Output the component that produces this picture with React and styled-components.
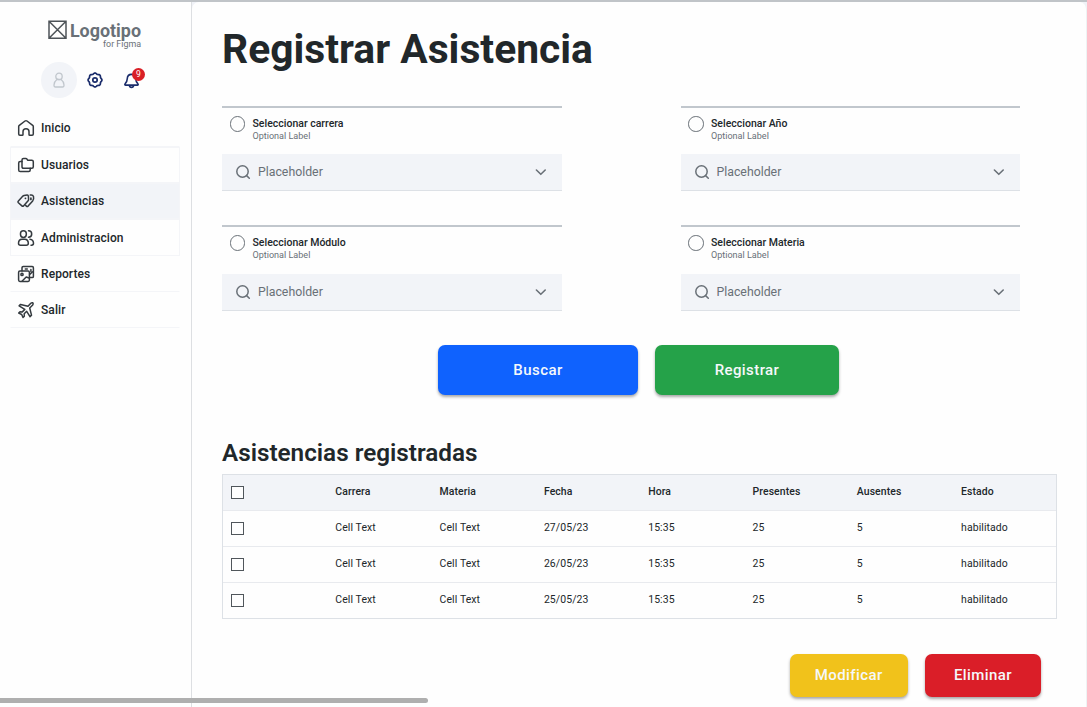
import React from "react";
import styled, { createGlobalStyle, css } from "styled-components";

const GlobalStyle = createGlobalStyle`
  * { box-sizing: border-box; }
  html, body { margin: 0; height: 100%; overflow: hidden; }
  body { font-family: Roboto, "Liberation Sans", sans-serif; background: #fefefe; color: #21272a; }
`;

const Page = styled.div`
  width: 1087px;
  height: 707px;
  display: flex;
  border-top: 2px solid #c0c4c8;
  background: #f0f2f7;
  overflow: hidden;
  position: relative;
`;

const Sidebar = styled.aside`
  width: 192px;
  flex: none;
  background: #fefefe;
  border-right: 1px solid #dddfe2;
`;

const Brand = styled.div`
  display: flex;
  justify-content: flex-end;
  margin: 17px 50px 0 0;
  height: 43px;
  color: #697077;
`;

const BrandMark = styled.svg`
  width: 19px;
  height: 20px;
  margin: 1px 2.5px 0 0;
  flex: none;
`;

const BrandText = styled.div`
  display: flex;
  flex-direction: column;
  align-items: flex-end;
`;

const BrandName = styled.div`
  font-size: 17.9px;
  line-height: 23px;
  font-weight: 700;
`;

const BrandNote = styled.div`
  font-size: 8.9px;
  line-height: 10px;
  margin-top: -3px;
`;

const Tools = styled.div`
  display: flex;
  align-items: center;
  margin-left: 41px;
  height: 36px;
`;

const Avatar = styled.div`
  width: 36px;
  height: 36px;
  border-radius: 50%;
  background: #f2f4f8;
  display: grid;
  place-items: center;
  margin-right: 9px;
`;

const BellWrap = styled.div`
  position: relative;
  width: 17px;
  height: 17px;
  margin-left: 19px;
`;

const Badge = styled.span`
  position: absolute;
  left: 9px;
  top: -4px;
  width: 13px;
  height: 13px;
  border-radius: 50%;
  background: #d91f26;
  color: #fff;
  font-size: 8.5px;
  line-height: 13px;
  text-align: center;
`;

const Nav = styled.nav`
  margin: 12.3px 11px 0 10px;
  display: flex;
  flex-direction: column;
`;

const NavItem = styled.a`
  height: 36.35px;
  display: flex;
  align-items: center;
  gap: 6px;
  padding-left: 6px;
  font-size: 12px;
  font-weight: 500;
  letter-spacing: 0.08px;
  color: #21272a;
  border: 1px solid transparent;
  border-bottom-color: #f4f5f8;
  ${(p) => p.$boxed && css`border-color: #f4f5f8;`}
  ${(p) => p.$active && css`background: #f2f4f8;`}
`;

const Icon = styled.svg`
  width: ${(p) => p.$size || 18}px;
  height: ${(p) => p.$size || 18}px;
  flex: none;
  display: block;
  fill: none;
  stroke: ${(p) => p.$color || "#343a3f"};
  stroke-width: ${(p) => p.$weight || 1.5};
  stroke-linecap: round;
  stroke-linejoin: round;
`;

const Main = styled.main`
  flex: 1;
  background: #fefefe;
  border-right: 1px solid #eef3f4;
  border-radius: 7px 7px 0 0;
  padding-left: 30px;
`;

const Title = styled.h1`
  margin: 22px 0 0;
  font-size: 40.8px;
  line-height: 51px;
  font-weight: 700;
  white-space: nowrap;
`;

const Filters = styled.section`
  display: grid;
  grid-template-columns: 339.5px 339.5px;
  column-gap: 119px;
  row-gap: 33.9px;
  margin-top: 30.5px;
`;

const Field = styled.div`
  height: 85.6px;
  border-top: 2px solid #c1c7cd;
  display: flex;
  flex-direction: column;
  justify-content: space-between;
`;

const FieldHead = styled.label`
  display: flex;
  gap: 7.5px;
  padding: 8.5px 0 0 7.5px;
`;

const Radio = styled.span`
  width: 15.5px;
  height: 15.5px;
  border: 1.5px solid #697077;
  border-radius: 50%;
`;

const FieldLabel = styled.div`
  font-size: 10.5px;
  line-height: 15px;
  font-weight: 500;
`;

const FieldHint = styled.div`
  font-size: 9.05px;
  line-height: 11px;
  color: #697077;
`;

const Select = styled.div`
  height: 37px;
  display: flex;
  align-items: center;
  background: #f2f4f8;
  border-bottom: 1.5px solid #dde1e6;
  padding: 0 13px;
  color: #697077;
  font-size: 12.3px;
`;

const SelectText = styled.span`
  flex: 1;
  margin-left: 7px;
`;

const Button = styled.button`
  width: ${(p) => p.$w}px;
  height: ${(p) => p.$h}px;
  background: ${(p) => p.$bg};
  border: 0;
  border-radius: 7px;
  color: #f5f8fb;
  font-family: inherit;
  font-size: 15px;
  font-weight: 500;
  letter-spacing: 0.42px;
  padding: 0;
  box-shadow: 0 2px 3px rgba(0, 0, 0, 0.34);
`;

const SearchActions = styled.div`
  display: flex;
  gap: 17px;
  margin: 34.4px 0 0 216px;
`;

const RowActions = styled.div`
  display: flex;
  gap: 17px;
  margin: 34.8px 0 0 567.5px;
`;

const Subtitle = styled.h2`
  margin: 42px 0 0;
  font-size: 24.25px;
  line-height: 32px;
  font-weight: 600;
`;

const Table = styled.div`
  width: 834.5px;
  margin-top: 5px;
  border: 1px solid #dde1e6;
`;

const Row = styled.div`
  height: 36px;
  display: grid;
  grid-template-columns: 104px repeat(6, 104.3px) 1fr;
  align-items: center;
  font-size: 10.45px;
  letter-spacing: 0.1px;
  ${(p) => p.$head && css`
    background: #f2f4f8;
    font-weight: 500;
    height: 35px;
  `}
  & + & { border-top: 1px solid #e8eaee; }
`;

const Cell = styled.div`
  padding-left: 8.3px;
  line-height: 14px;
  margin-top: -1.4px;
`;

const Check = styled.span`
  display: block;
  width: 13px;
  height: 13px;
  margin: 0 0 0 8px;
  border: 1px solid #50565b;
  background: #fefefe;
`;

const ScrollThumb = styled.div`
  position: absolute;
  left: -4px;
  bottom: 4px;
  width: 432px;
  height: 5px;
  border-radius: 3px;
  background: #afafaf;
`;

const HomeIcon = () => (
  <Icon viewBox="0 0 18 18">
    <path d="M1.7 7.6Q1.7 6.9 2.3 6.4L8 2Q9 1.3 10 2l5.700 4.400q.6.500.6 1.200v7.400q0 1.200-1.200 1.200h-2.300q-.8 0-.8-.8v-2.700a3 3 0 0 0-6 0v2.700q0 .8-.8.8H2.900q-1.200 0-1.200-1.200Z" />
  </Icon>
);

const FoldersIcon = () => (
  <Icon viewBox="0 0 18 18">
    <path d="M5 4q0-1.500 1.500-1.500h2.300q.8 0 1.200.7l.6 1h4.200q1.500 0 1.500 1.500v5.100q0 1.500-1.500 1.500H6.500Q5 12.300 5 10.800Z" />
    <path d="M5 5.400H3.200q-1.500 0-1.500 1.500v7q0 1.600 1.600 1.600h8.400q1.500 0 1.500-1.500v-1.700" />
  </Icon>
);

const TagsIcon = () => (
  <Icon viewBox="0 0 18 18">
    <path d="M1.400 8.900 5.900 4.100q.5-.5 1.200-.6l3-.4q1.200-.1 1.300 1.100l.2 3.300q0 .7-.5 1.200l-4.600 5.200q-.8.8-1.600 0L1.400 10.700q-.8-.9 0-1.800Z" />
    <path d="M13.300 3.100q2.500-.5 3.200 1.500.6 2.300-.8 4.300l-4.600 5.200q-.8.800-1.700 0L8.700 13.400" />
    <path d="M8.400 6.300h.1M13.900 6.200v1.300" strokeWidth="1.700" />
  </Icon>
);

const UsersIcon = () => (
  <Icon viewBox="0 0 18 18">
    <rect x="3.500" y="1.700" width="5.800" height="6.700" rx="2.900" />
    <path d="M1.500 14.300q0-4 3.600-4.100h2.600q3.600.1 3.600 4.100 0 2-2 2H3.500q-2 0-2-2Z" />
    <path d="M11.500 1.800a3.200 3.200 0 0 1 0 6.400M12.900 10.200q3.600.4 3.600 4.100 0 1.900-1.900 1.900h-.6" />
  </Icon>
);

const ReportsIcon = () => (
  <Icon viewBox="0 0 18 18">
    <rect x="1.600" y="6.100" width="10.800" height="10.300" rx="1.300" />
    <path d="M5 5.700V2.800q0-1.200 1.200-1.200h9q1.200 0 1.200 1.200v8.600q0 1.200-1.200 1.200h-2.400" />
    <circle cx="5" cy="9.400" r="1.100" />
    <path d="m5.200 16 4-4 3 1M8.300 3.900h2M13.900 4.500v2M12.700 9.400l3-2.600" />
  </Icon>
);

const PlaneIcon = () => (
  <Icon viewBox="0 0 18 18">
    <path d="M11 5.200 13.800 2.300q1-.9 2-.5.8.8-.1 2.200l-3 3 1.800 7.100-1.500 1.500-3.300-5.300-2.500 2.500.1 2.400-1.300 1.300-1.300-3-3-1.400 1.300-1.300 2.300.1L7.800 8.400 2.100 4.900l1.500-1.500Z" />
  </Icon>
);

const PersonIcon = () => (
  <Icon viewBox="0 0 18 18" $color="#c1c7cd" $weight={1.300}>
    <circle cx="9" cy="5.400" r="3.200" />
    <path d="M6.900 8.500h4.200q2.700 2 2.900 5.500.1 2-1.600 2H5.600q-1.700 0-1.600-2 .2-3.500 2.900-5.500Z" />
  </Icon>
);

const gearPath = (() => {
  const pts = [];
  for (let i = 0; i <= 96; i += 1) {
    const a = (i / 96) * Math.PI * 2;
    const r = 6.500 + 0.450 * Math.cos(a * 8);
    pts.push(`${(9 + r * Math.cos(a)).toFixed(2)} ${(9 + r * Math.sin(a)).toFixed(2)}`);
  }
  return `M${pts.join("L")}Z`;
})();

const GearIcon = () => (
  <Icon viewBox="0 0 18 18" $color="#1a2c6b" $weight={1.700}>
    <path d={gearPath} />
    <circle cx="9" cy="9" r="2.200" />
  </Icon>
);

const BellIcon = () => (
  <Icon viewBox="0 0 18 18" $size={17} $color="#1a2c6b" $weight={1.700}>
    <path d="M9 2.500c-3 0-4.400 2.100-4.500 4.700-.1 2.900-.6 3.900-2.300 5.400-.5.600-.3 1.300.6 1.300h12.400c.9 0 1.100-.7.600-1.300-1.700-1.500-2.200-2.500-2.300-5.400C13.400 4.600 12 2.500 9 2.500ZM6.800 14.200c.2 2.800 4.200 2.800 4.400 0" />
  </Icon>
);

const SearchIcon = () => (
  <Icon viewBox="0 0 16 16" $size={16} $color="#697077" $weight={1.500}>
    <circle cx="7.500" cy="7.500" r="5.700" />
    <path d="m11.600 11.600 2.700 2.700" />
  </Icon>
);

const ChevronIcon = () => (
  <Icon viewBox="0 0 16 16" $size={16} $color="#697077" $weight={1.600}>
    <path d="m3.400 6 4.400 4.300L12.200 6" />
  </Icon>
);

const navItems = [
  { label: "Inicio", icon: HomeIcon },
  { label: "Usuarios", icon: FoldersIcon, boxed: true },
  { label: "Asistencias", icon: TagsIcon, boxed: true, active: true },
  { label: "Administracion", icon: UsersIcon, boxed: true },
  { label: "Reportes", icon: ReportsIcon },
  { label: "Salir", icon: PlaneIcon },
];

const fields = ["Seleccionar carrera", "Seleccionar Año", "Seleccionar Módulo", "Seleccionar Materia"];
const columns = ["Carrera", "Materia", "Fecha", "Hora", "Presentes", "Ausentes", "Estado"];
const records = ["27/05/23", "26/05/23", "25/05/23"].map((date) => [
  "Cell Text", "Cell Text", date, "15:35", "25", "5", "habilitado",
]);

export default function App() {
  return (
    <>
      <GlobalStyle />
      <Page>
        <Sidebar>
          <Brand>
            <BrandMark viewBox="0 0 19 20" fill="none" stroke="#4d5358" strokeWidth="1.500">
              <path d="M1 1.200h17v17H1ZM1 1.200l17 17M18 1.200l-17 17" />
            </BrandMark>
            <BrandText>
              <BrandName>Logotipo</BrandName>
              <BrandNote>for Figma</BrandNote>
            </BrandText>
          </Brand>
          <Tools>
            <Avatar><PersonIcon /></Avatar>
            <GearIcon />
            <BellWrap>
              <BellIcon />
              <Badge>9</Badge>
            </BellWrap>
          </Tools>
          <Nav>
            {navItems.map(({ label, icon: Glyph, boxed, active }) => (
              <NavItem key={label} $boxed={boxed} $active={active}>
                <Glyph />
                {label}
              </NavItem>
            ))}
          </Nav>
        </Sidebar>
        <Main>
          <Title>Registrar Asistencia</Title>
          <Filters>
            {fields.map((label) => (
              <Field key={label}>
                <FieldHead>
                  <Radio />
                  <div>
                    <FieldLabel>{label}</FieldLabel>
                    <FieldHint>Optional Label</FieldHint>
                  </div>
                </FieldHead>
                <Select>
                  <SearchIcon />
                  <SelectText>Placeholder</SelectText>
                  <ChevronIcon />
                </Select>
              </Field>
            ))}
          </Filters>
          <SearchActions>
            <Button $w={200} $h={50} $bg="#0f62fe">Buscar</Button>
            <Button $w={184} $h={50} $bg="#25a249">Registrar</Button>
          </SearchActions>
          <Subtitle>Asistencias registradas</Subtitle>
          <Table>
            <Row $head>
              <Check />
              {columns.map((name) => <Cell key={name}>{name}</Cell>)}
            </Row>
            {records.map((cells, r) => (
              <Row key={r}>
                <Check />
                {cells.map((text, c) => <Cell key={c}>{text}</Cell>)}
              </Row>
            ))}
          </Table>
          <RowActions>
            <Button $w={118.500} $h={43} $bg="#f1c21b">Modificar</Button>
            <Button $w={116} $h={43} $bg="#da1e28">Eliminar</Button>
          </RowActions>
        </Main>
        <ScrollThumb />
      </Page>
    </>
  );
}
